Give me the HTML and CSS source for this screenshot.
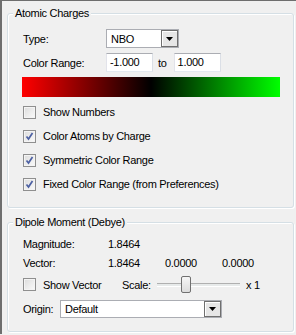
FILE: index.html
```html
<!DOCTYPE html>
<html lang="en">

<head>
  <meta charset="UTF-8">
  <title>Charges</title>
  <link rel="stylesheet" href="styles.css">
</head>

<body>
  <div class="panel">
    <fieldset class="group charges">
      <legend>Atomic Charges</legend>
      <div class="group-body">
        <div class="field-row">
          <span class="field-label">Type:</span>
          <div class="combo type-combo">
            <span class="combo-text">NBO</span>
            <span class="combo-btn"><svg width="7" height="4" viewBox="0 0 7 4"><path d="M0 0h7L3.5 4z" fill="#000"/></svg></span>
          </div>
        </div>
        <div class="field-row">
          <span class="field-label">Color Range:</span>
          <span class="textbox">-1.000</span>
          <span class="to">to</span>
          <span class="textbox">1.000</span>
        </div>
        <div class="gradient-bar"></div>
        <ul class="checks">
          <li><span class="check"></span>Show Numbers</li>
          <li><span class="check on"><svg width="9" height="9" viewBox="0 0 9 9"><path d="M1.5 4.5l2 2.5 4-6" fill="none" stroke="#4d61a3" stroke-width="1.7"/></svg></span>Color Atoms by Charge</li>
          <li><span class="check on"><svg width="9" height="9" viewBox="0 0 9 9"><path d="M1.5 4.5l2 2.5 4-6" fill="none" stroke="#4d61a3" stroke-width="1.7"/></svg></span>Symmetric Color Range</li>
          <li><span class="check on"><svg width="9" height="9" viewBox="0 0 9 9"><path d="M1.5 4.5l2 2.5 4-6" fill="none" stroke="#4d61a3" stroke-width="1.7"/></svg></span>Fixed Color Range (from Preferences)</li>
        </ul>
      </div>
    </fieldset>

    <fieldset class="group dipole">
      <legend>Dipole Moment (Debye)</legend>
      <div class="group-body">
        <div class="value-row">
          <span class="value-label">Magnitude:</span>
          <span class="value">1.8464</span>
        </div>
        <div class="value-row">
          <span class="value-label">Vector:</span>
          <span class="value">1.8464</span>
          <span class="value">0.0000</span>
          <span class="value">0.0000</span>
        </div>
        <div class="vector-row">
          <span class="check"></span>
          <span class="check-text">Show Vector</span>
          <span class="scale-label">Scale:</span>
          <div class="slider">
            <span class="slider-track"></span>
            <span class="slider-thumb"></span>
          </div>
          <span class="scale-value">x 1</span>
        </div>
        <div class="origin-row">
          <span class="origin-label">Origin:</span>
          <div class="combo origin-combo">
            <span class="combo-text">Default</span>
            <span class="combo-btn"><svg width="7" height="4" viewBox="0 0 7 4"><path d="M0 0h7L3.5 4z" fill="#000"/></svg></span>
          </div>
        </div>
      </div>
    </fieldset>
  </div>
</body>

</html>
```

FILE: styles.css
```css
body {
  margin: 0;
  background: #f0f0f0;
  font-family: 'Liberation Sans', Arial, sans-serif;
  font-size: 11px;
  letter-spacing: -0.3px;
  color: #000;
}

.panel {
  height: 334px;
  border-top: 1px solid #6e6e6e;
  border-left: 2px solid #6e6e6e;
  box-sizing: border-box;
  overflow: hidden;
}

.group {
  margin: 0 2px 0 5px;
  padding: 0 0 0 5px;
  border: 1px solid #d5dfe5;
  border-radius: 3px;
  box-shadow: inset 1px 1px 0 #fff, 1px 1px 0 #fff;
}

.group legend {
  padding: 0 2px;
  line-height: 14px;
  background: #f0f0f0;
}

.charges {
  margin-top: 5px;
}

.dipole {
  margin-top: 7px;
}

.group-body {
  padding-left: 10px;
}

.charges .group-body {
  padding-top: 9px;
  padding-bottom: 11px;
}

.dipole .group-body {
  padding-top: 7px;
  padding-bottom: 13px;
}

.field-row {
  display: flex;
  align-items: center;
  height: 19px;
}

.field-row + .field-row {
  margin-top: 5px;
}

.field-label {
  width: 83px;
}

.combo {
  display: flex;
  align-items: center;
  height: 19px;
  box-sizing: border-box;
  border: 1px solid #abadb3;
  background: #fff;
}

.combo-text {
  flex: 1;
  padding-left: 4px;
}

.combo-btn {
  width: 17px;
  height: 17px;
  box-sizing: border-box;
  border: 1px solid #6f6f6f;
  background: #e6e6e6;
  display: flex;
  align-items: center;
  justify-content: center;
  box-shadow: inset 1px 1px 0 #fff;
}

.type-combo {
  width: 73px;
}

.textbox {
  width: 47px;
  height: 19px;
  box-sizing: border-box;
  border: 1px solid #abadb3;
  border-color: #abadb3 #dbdfe6 #e3e9ef #e2e3ea;
  background: #fff;
  padding-left: 3px;
  line-height: 17px;
}

.to {
  margin: 0 7px 0 5px;
}

.gradient-bar {
  margin: 5px 0 0 -1px;
  width: 258px;
  height: 20px;
  background: linear-gradient(to right, #ff0000, #000 50%, #00ff00);
}

.checks {
  list-style: none;
  margin: 3px 0 0;
  padding: 0;
}

.checks li {
  display: flex;
  align-items: center;
  height: 24px;
}

.check {
  width: 13px;
  height: 13px;
  box-sizing: border-box;
  border: 1px solid #8f8f8f;
  background: linear-gradient(135deg, #dcdcdc, #fbfbfb);
  box-shadow: inset 0 0 0 1px #f4f4f4;
  margin-right: 7px;
  display: flex;
  align-items: center;
  justify-content: center;
}

.value-row {
  display: flex;
  align-items: center;
  height: 16px;
}

.value-row + .value-row {
  margin-top: 3px;
}

.value-label {
  width: 85px;
}

.value {
  width: 57px;
}

.vector-row {
  display: flex;
  align-items: center;
  height: 19px;
  margin-top: 4px;
}

.check-text {
  width: 79px;
}

.scale-label {
  width: 35px;
}

.slider {
  position: relative;
  width: 83px;
  height: 17px;
  display: flex;
  align-items: center;
}

.slider-track {
  width: 100%;
  height: 2px;
  background: #e7eaea;
  border-top: 1px solid #b0b0b0;
  border-bottom: 1px solid #fff;
}

.slider-thumb {
  position: absolute;
  left: 24px;
  top: 0;
  width: 10px;
  height: 17px;
  box-sizing: border-box;
  border: 1px solid #707070;
  border-radius: 2px;
  background: linear-gradient(#f6f6f6, #dcdcdc);
}

.scale-value {
  margin-left: 6px;
}

.origin-row {
  display: flex;
  align-items: center;
  height: 18px;
  margin-top: 6px;
}

.origin-label {
  width: 37px;
}

.origin-combo {
  width: 162px;
  height: 18px;
}

.origin-combo .combo-btn {
  height: 16px;
}
```
